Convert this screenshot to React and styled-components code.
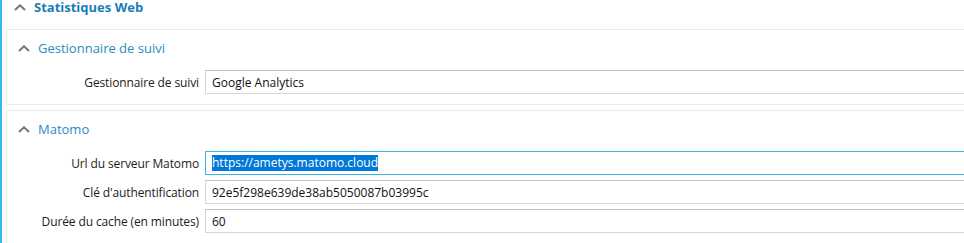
import styled, { createGlobalStyle } from "styled-components";

const GlobalStyle = createGlobalStyle`
  body {
    margin: 0;
    background: #fff;
    font-family: "Open Sans", "Noto Sans", sans-serif;
    overflow: hidden;
  }
`;

const Page = styled.div`
  display: flex;
  height: 243px;
  border-left: 2px solid #3bb5ee;
  box-sizing: border-box;
`;

const Content = styled.div`
  flex: 1;
  padding-left: 4px;
  display: flex;
  flex-direction: column;
`;

const MainHeader = styled.div`
  display: flex;
  align-items: center;
  gap: 8px;
  height: 14px;
  padding-left: 8px;
  margin-bottom: 15px;
  font-size: 13px;
  font-weight: 700;
  color: #1a7db6;
  line-height: 14px;
`;

const Panel = styled.section`
  border-top: 1px solid #ececec;
  border-left: 1px solid #ececec;
  border-bottom: 1px solid #ececec;
  padding-bottom: ${(p) => p.$bottom || 10}px;
  margin-bottom: 5px;
`;

const PanelHeader = styled.div`
  display: flex;
  align-items: center;
  gap: 8px;
  height: 36px;
  padding-left: 11px;
  font-size: 13px;
  color: #2a8cc4;
`;

const Rows = styled.div`
  display: flex;
  flex-direction: column;
  gap: 5px;
  margin-top: 4px;
`;

const Row = styled.div`
  display: grid;
  grid-template-columns: 192px 1fr;
  column-gap: 6px;
  align-items: center;
  height: 24px;
`;

const Label = styled.label`
  text-align: right;
  font-size: 12px;
  letter-spacing: -0.12px;
  color: #1c1c1c;
  white-space: nowrap;
`;

const Field = styled.div`
  height: 24px;
  box-sizing: border-box;
  border: 1px solid #d6d6d6;
  border-top-color: #c2c2c2;
  border-right: none;
  padding-left: 6px;
  display: flex;
  align-items: center;
  font-size: 12px;
  color: #111;
  white-space: nowrap;

  ${(p) =>
    p.$focused &&
    `
    border-color: #3cb3ea;
  `}
`;

const Selected = styled.span`
  background: #0078d7;
  color: #fff;
  line-height: 16px;
`;

const Chevron = () => (
  <svg width="12" height="7" viewBox="0 0 12 7">
    <path d="M1 6 L6 1.3 L11 6" fill="none" stroke="#777" strokeWidth="2" />
  </svg>
);

export default function App() {
  return (
    <>
      <GlobalStyle />
      <Page>
        <Content>
          <MainHeader>
            <Chevron />
            Statistiques Web
          </MainHeader>

          <Panel>
            <PanelHeader>
              <Chevron />
              Gestionnaire de suivi
            </PanelHeader>
            <Rows>
              <Row>
                <Label>Gestionnaire de suivi</Label>
                <Field>Google Analytics</Field>
              </Row>
            </Rows>
          </Panel>

          <Panel $bottom={20}>
            <PanelHeader>
              <Chevron />
              Matomo
            </PanelHeader>
            <Rows>
              <Row>
                <Label>Url du serveur Matomo</Label>
                <Field $focused>
                  <Selected>https://ametys.matomo.cloud</Selected>
                </Field>
              </Row>
              <Row>
                <Label>Clé d'authentification</Label>
                <Field>92e5f298e639de38ab5050087b03995c</Field>
              </Row>
              <Row>
                <Label>Durée du cache (en minutes)</Label>
                <Field>60</Field>
              </Row>
            </Rows>
          </Panel>
        </Content>
      </Page>
    </>
  );
}
